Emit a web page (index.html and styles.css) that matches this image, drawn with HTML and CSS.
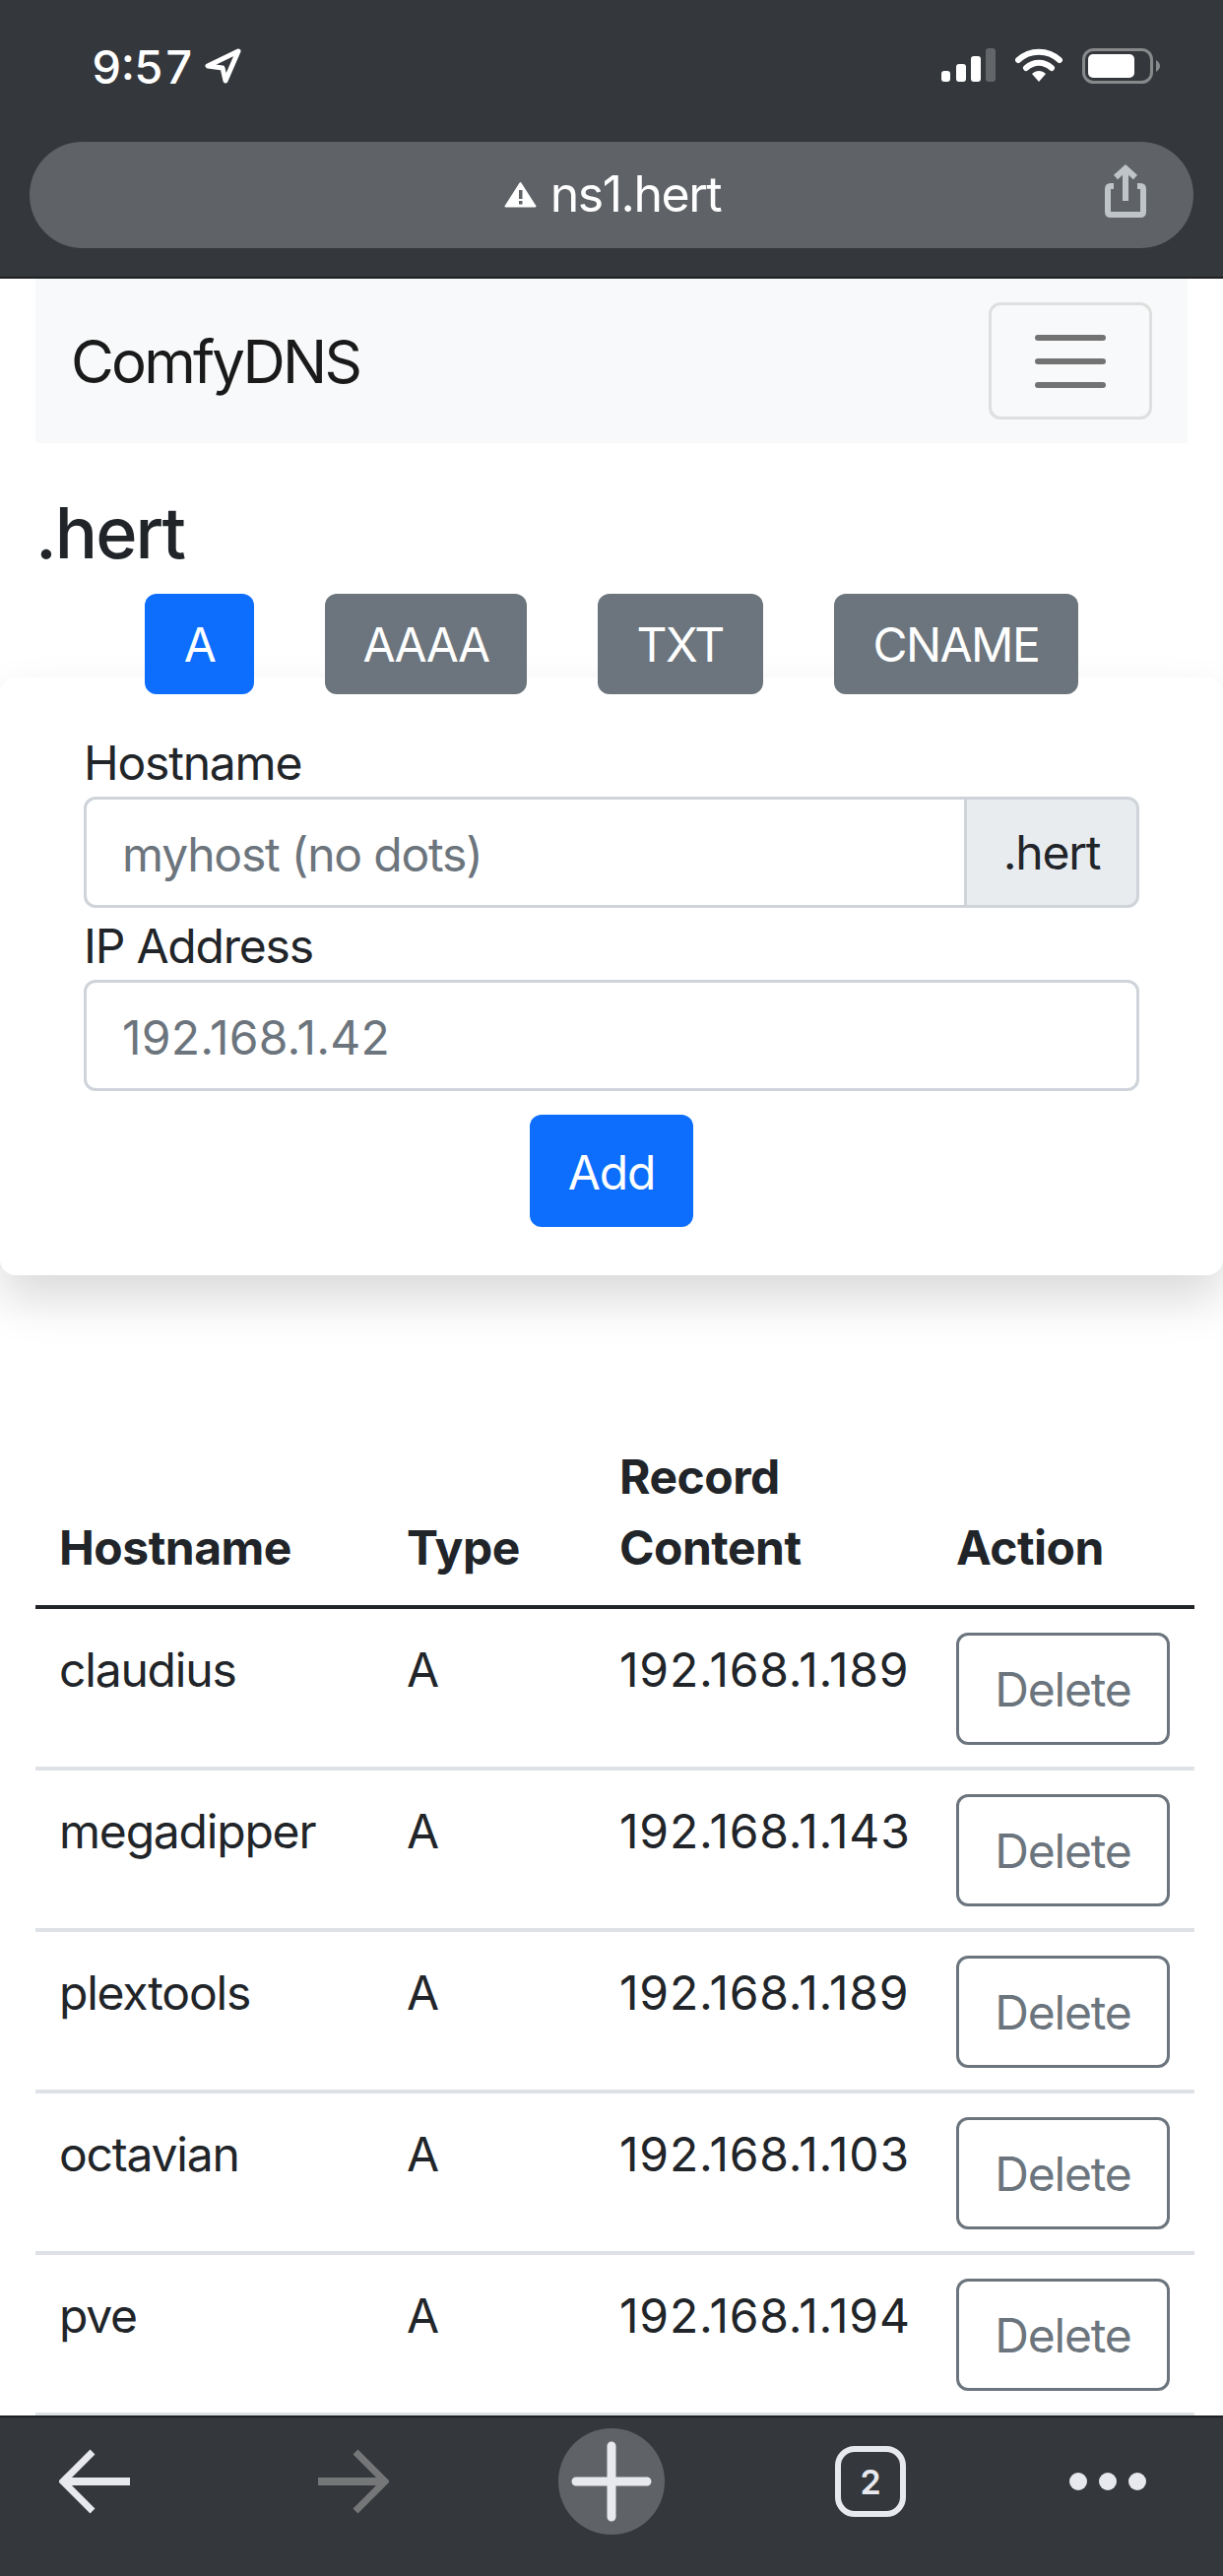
FILE: index.html
```html
<!DOCTYPE html>
<html lang="en">
<head>
    <meta charset="UTF-8">
    <meta name="viewport" content="width=device-width, initial-scale=1.0">
    <title>ComfyDNS</title>
    <link rel="stylesheet" href="styles.css">
</head>
<body>
    <header class="browser-top">
        <div class="status-row">
            <div class="status-left">
                <span class="clock">9:57</span>
                <svg class="loc-icon" width="38" height="36" viewBox="0 0 38 36">
                    <path d="M34 3 L3 18 L18 20 L21 33 Z" fill="none" stroke="#fff" stroke-width="5" stroke-linejoin="round"/>
                </svg>
            </div>
            <div class="status-right">
                <svg width="55" height="34" viewBox="0 0 55 34">
                    <rect x="0" y="23" width="9" height="11" rx="3" fill="#fff"/>
                    <rect x="15" y="16" width="10" height="18" rx="3" fill="#fff"/>
                    <rect x="30" y="8" width="10" height="26" rx="3" fill="#fff"/>
                    <rect x="45" y="0" width="10" height="34" rx="3" fill="#636669"/>
                </svg>
                <svg width="48" height="34" viewBox="0 0 48 34">
                    <path d="M3 12 C15 1 33 1 45 12" fill="none" stroke="#fff" stroke-width="6" stroke-linecap="round"/>
                    <path d="M11 20 C19 13 29 13 37 20" fill="none" stroke="#fff" stroke-width="6" stroke-linecap="round"/>
                    <path d="M17 26 L24 34 L31 26 C27 22 21 22 17 26 Z" fill="#fff"/>
                </svg>
                <svg width="79" height="36" viewBox="0 0 79 36">
                    <rect x="1.5" y="1.5" width="69" height="33" rx="10" fill="none" stroke="#87898b" stroke-width="3"/>
                    <rect x="6" y="6" width="47" height="24" rx="5" fill="#fff"/>
                    <path d="M75 12 C78 14 79 16 79 18 C79 20 78 22 75 24 Z" fill="#87898b"/>
                </svg>
            </div>
        </div>
        <div class="url-bar">
            <div class="url-text">
                <svg width="33" height="27" viewBox="0 0 33 27">
                    <path d="M16.5 2 L31.500 25.500 L1.500 25.500 Z" fill="#fff" stroke="#fff" stroke-width="2" stroke-linejoin="round"/>
                    <rect x="15" y="9" width="3.500" height="9" fill="#5f6367"/>
                    <rect x="15" y="20" width="3.500" height="3.500" fill="#5f6367"/>
                </svg>
                <span>ns1.hert</span>
            </div>
            <svg class="share-icon" width="42" height="54" viewBox="0 0 42 54">
                <path d="M9 22 L6 22 Q3 22 3 25 L3 48 Q3 51 6 51 L36 51 Q39 51 39 48 L39 25 Q39 22 36 22 L33 22" fill="none" stroke="#bfc4c8" stroke-width="6"/>
                <path d="M21 6 L21 37" stroke="#bfc4c8" stroke-width="6"/>
                <path d="M11 13 L21 4 L31 13" fill="none" stroke="#bfc4c8" stroke-width="6"/>
            </svg>
        </div>
    </header>

    <main class="page">
        <nav class="navbar">
            <span class="brand">ComfyDNS</span>
            <button class="toggler">
                <span></span><span></span><span></span>
            </button>
        </nav>

        <h4 class="zone-title">.hert</h4>

        <div class="type-tabs">
            <button class="btn btn-primary">A</button>
            <button class="btn btn-secondary btn-aaaa">AAAA</button>
            <button class="btn btn-secondary">TXT</button>
            <button class="btn btn-secondary">CNAME</button>
        </div>

        <form class="add-card">
            <label class="field-label">Hostname</label>
            <div class="input-group">
                <input class="form-input joined" placeholder="myhost (no dots)">
                <span class="addon">.hert</span>
            </div>
            <label class="field-label field-label-next">IP Address</label>
            <input class="form-input ip" placeholder="192.168.1.42">
            <div class="form-actions">
                <button type="button" class="btn btn-primary btn-add">Add</button>
            </div>
        </form>

        <table class="records">
            <thead>
                <tr>
                    <th class="col-host">Hostname</th>
                    <th class="col-type">Type</th>
                    <th class="col-content">Record Content</th>
                    <th class="col-action">Action</th>
                </tr>
            </thead>
            <tbody>
                <tr>
                    <td>claudius</td><td>A</td><td class="ip">192.168.1.189</td>
                    <td><button class="btn btn-outline">Delete</button></td>
                </tr>
                <tr>
                    <td>megadipper</td><td>A</td><td class="ip">192.168.1.143</td>
                    <td><button class="btn btn-outline">Delete</button></td>
                </tr>
                <tr>
                    <td>plextools</td><td>A</td><td class="ip">192.168.1.189</td>
                    <td><button class="btn btn-outline">Delete</button></td>
                </tr>
                <tr>
                    <td>octavian</td><td>A</td><td class="ip">192.168.1.103</td>
                    <td><button class="btn btn-outline">Delete</button></td>
                </tr>
                <tr>
                    <td>pve</td><td>A</td><td class="ip">192.168.1.194</td>
                    <td><button class="btn btn-outline">Delete</button></td>
                </tr>
            </tbody>
        </table>
    </main>

    <footer class="browser-bottom">
        <svg width="72" height="66" viewBox="0 0 72 66">
            <path d="M72 33 L4 33" stroke="#e8e9ee" stroke-width="8"/>
            <path d="M34 3 L4 33 L34 63" fill="none" stroke="#e8e9ee" stroke-width="7"/>
        </svg>
        <svg width="72" height="66" viewBox="0 0 72 66">
            <path d="M0 33 L68 33" stroke="#757678" stroke-width="8"/>
            <path d="M38 3 L68 33 L38 63" fill="none" stroke="#757678" stroke-width="7"/>
        </svg>
        <svg width="108" height="108" viewBox="0 0 108 108">
            <circle cx="54" cy="54" r="54" fill="#5f6367"/>
            <path d="M54 18 L54 90 M18 54 L90 54" stroke="#e8e9ee" stroke-width="9" stroke-linecap="round"/>
        </svg>
        <div class="tab-count">2</div>
        <svg width="80" height="20" viewBox="0 0 80 20">
            <circle cx="10" cy="10" r="9" fill="#e8e9ee"/>
            <circle cx="40" cy="10" r="9" fill="#e8e9ee"/>
            <circle cx="70" cy="10" r="9" fill="#e8e9ee"/>
        </svg>
    </footer>
</body>
</html>
```
FILE: styles.css
```css
* {
    box-sizing: border-box;
}

html, body {
    margin: 0;
    padding: 0;
}

body {
    width: 1242px;
    height: 2616px;
    display: flex;
    flex-direction: column;
    overflow: hidden;
    background: #fff;
    color: #212529;
    font-family: Inter, "Liberation Sans", Arial, sans-serif;
    font-size: 48px;
    letter-spacing: -1.2px;
}

/* browser chrome */
.browser-top {
    height: 283px;
    flex: none;
    background: #34373b;
    border-bottom: 2px solid #1f2124;
    padding: 49px 30px 0;
}

.status-row {
    display: flex;
    justify-content: space-between;
    height: 95px;
    padding: 0 34px 0 63px;
}

.status-left {
    display: flex;
    align-items: flex-start;
    gap: 14px;
}

.clock {
    color: #fff;
    font-size: 47px;
    font-weight: 500;
    line-height: 38px;
    letter-spacing: 0;
    font-variant-numeric: tabular-nums;
    width: 101px;
}

.status-right {
    display: flex;
    align-items: flex-start;
    gap: 20px;
}

.url-bar {
    height: 108px;
    background: #5f6367;
    border-radius: 54px;
    display: flex;
    align-items: center;
    justify-content: center;
    position: relative;
}

.url-text {
    display: flex;
    align-items: center;
    gap: 14px;
    color: #fff;
    font-size: 50px;
    letter-spacing: -1.5px;
    margin-left: 2px;
    margin-bottom: 2px;
}

.share-icon {
    position: absolute;
    right: 48px;
    top: 23px;
}

/* page */
.page {
    flex: 1;
    min-height: 0;
    overflow: hidden;
}

.navbar {
    margin: 0 36px;
    height: 167px;
    background: #f8f9fa;
    padding: 0 36px;
    display: flex;
    align-items: center;
    justify-content: space-between;
}

.brand {
    font-size: 60px;
    letter-spacing: -2.8px;
    color: #1a1a1a;
}

.toggler {
    width: 166px;
    height: 119px;
    background: transparent;
    border: 3px solid #dfdfdf;
    border-radius: 12px;
    display: flex;
    flex-direction: column;
    align-items: center;
    justify-content: center;
    gap: 18px;
    padding: 0;
}

.toggler span {
    width: 72px;
    height: 6px;
    border-radius: 3px;
    background: #737373;
}

.zone-title {
    margin: 48px 0 0 36px;
    font-size: 72px;
    font-weight: 500;
    line-height: 86px;
    letter-spacing: -2px;
}

.type-tabs {
    display: flex;
    justify-content: center;
    gap: 72px;
    margin-top: 19px;
    position: relative;
    z-index: 1;
    letter-spacing: -1.6px;
}

.btn {
    font-family: inherit;
    font-size: 48px;
    letter-spacing: inherit;
    border: 0;
    border-radius: 12px;
    height: 102px;
    padding: 0 39px;
    color: #fff;
}

.btn-primary {
    background: #0d6efd;
}

.btn-secondary {
    background: #6c757d;
}

.type-tabs .btn {
    padding: 0 40px;
}

.type-tabs .btn-aaaa {
    padding: 0 38px;
}

.add-card {
    margin-top: -17px;
    height: 607px;
    background: #fff;
    border-radius: 16px;
    box-shadow: 0 24px 48px rgba(0, 0, 0, 0.15);
    padding: 51px 85px 0;
}

.field-label {
    display: block;
    line-height: 72px;
    height: 70px;
}

.field-label-next {
    margin-top: 3px;
}

.input-group {
    display: flex;
}

.form-input {
    display: block;
    width: 100%;
    height: 113px;
    border: 3px solid #ced4da;
    border-radius: 12px;
    padding: 3px 36px 0;
    font-family: inherit;
    font-size: 48px;
    letter-spacing: inherit;
    color: #212529;
}

.form-input::placeholder {
    color: #6c757d;
    opacity: 1;
}

.form-input.joined {
    flex: 1;
    border-radius: 12px 0 0 12px;
}

.form-input.ip {
    letter-spacing: 0.2px;
}

.addon {
    width: 178px;
    margin-left: -3px;
    background: #e9ecef;
    border: 3px solid #ced4da;
    border-radius: 0 12px 12px 0;
    display: flex;
    align-items: center;
    justify-content: center;
}

.form-actions {
    display: flex;
    justify-content: center;
    margin-top: 24px;
}

.btn-add {
    height: 114px;
    width: 166px;
    padding: 2px 0 0;
}

/* records table */
.records {
    margin: 143px 29px 0 36px;
    width: 1177px;
    border-collapse: collapse;
    table-layout: fixed;
}

.records th {
    text-align: left;
    font-weight: 700;
    line-height: 72px;
    letter-spacing: -0.5px;
    padding: 26px 24px 22px;
    vertical-align: bottom;
    border-bottom: 4px solid #212529;
}

.records td {
    padding: 24px 24px 22px;
    vertical-align: top;
    line-height: 75px;
    border-bottom: 4px solid #dee2e6;
}

.records td.ip {
    letter-spacing: 0.8px;
}

.col-host {
    width: 353px;
}

.col-type {
    width: 216px;
}

.col-content {
    width: 342px;
}

.col-action {
    width: 266px;
}

.btn-outline {
    display: block;
    width: 217px;
    height: 114px;
    padding: 0;
    background: #fff;
    border: 3px solid #6c757d;
    color: #6c757d;
}

.browser-bottom {
    height: 163px;
    flex: none;
    background: #34373b;
    border-top: 2px solid #1f2124;
    display: grid;
    grid-template-columns: 192px 334px 190px 336px 146px;
    justify-items: center;
    align-items: center;
    padding-bottom: 31px;
}

.tab-count {
    width: 72px;
    height: 72px;
    border: 6px solid #e8e9ee;
    border-radius: 20px;
    color: #e8e9ee;
    font-size: 34px;
    font-weight: 600;
    letter-spacing: 0;
    display: flex;
    align-items: center;
    justify-content: center;
}
```
